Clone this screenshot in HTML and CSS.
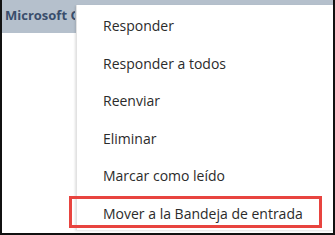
FILE: index.html
```html
<!DOCTYPE html>
<html lang="es">
  <head>
    <meta charset="UTF-8" />
    <meta name="viewport" content="width=device-width, initial-scale=1.0" />
    <title>Menú contextual</title>
    <link rel="stylesheet" href="styles.css">
  </head>
  <body>
    <div class="frame">
      <div class="header-bar">
        <span class="sender">Microsoft O</span>
      </div>

      <ul class="context-menu">
        <li class="menu-item">Responder</li>
        <li class="menu-item">Responder a todos</li>
        <li class="menu-item">Reenviar</li>
        <li class="menu-item">Eliminar</li>
        <li class="menu-item">Marcar como leído</li>
        <li class="menu-item">Mover a la Bandeja de entrada</li>
      </ul>

      <!-- callout around the last option -->
      <div class="highlight"></div>
    </div>
  </body>
</html>
```

FILE: styles.css
```css
body {
  margin: 0;
  font-family: "Open Sans", "Noto Sans", sans-serif;
  background: white;
}

.frame {
  position: relative;
  width: 335px;
  height: 235px;
  box-sizing: border-box;
  border: 2px solid #111;
  border-top: none;
  background: white;
  overflow: hidden;
}

.header-bar {
  height: 33px;
  background: #b5c0cc;
  padding-left: 3px;
  white-space: nowrap;
}

/* menu covers the rest of the name */
.sender {
  display: inline-block;
  max-width: 70px;
  overflow: hidden;
  vertical-align: top;
  font-size: 13px;
  font-weight: 700;
  color: #3a4e6c;
  line-height: 30px;
}

.context-menu {
  position: absolute;
  top: 5px;
  left: 74px;
  right: -4px;
  bottom: 3px;
  margin: 0;
  padding: 2px 0 0 0;
  list-style: none;
  background: white;
  border-left: 1px solid #e2e2e2;
  box-shadow: -1px 1px 2px rgba(0, 0, 0, 0.12);
}

.menu-item {
  height: 37.5px;
  line-height: 37.5px;
  padding-left: 26px;
  font-size: 14px;
  color: #2b2b2b;
  white-space: nowrap;
}

.highlight {
  position: absolute;
  left: 67px;
  top: 196px;
  width: 253px;
  height: 32px;
  box-sizing: border-box;
  border: 3px solid #e8443f;
}
```
